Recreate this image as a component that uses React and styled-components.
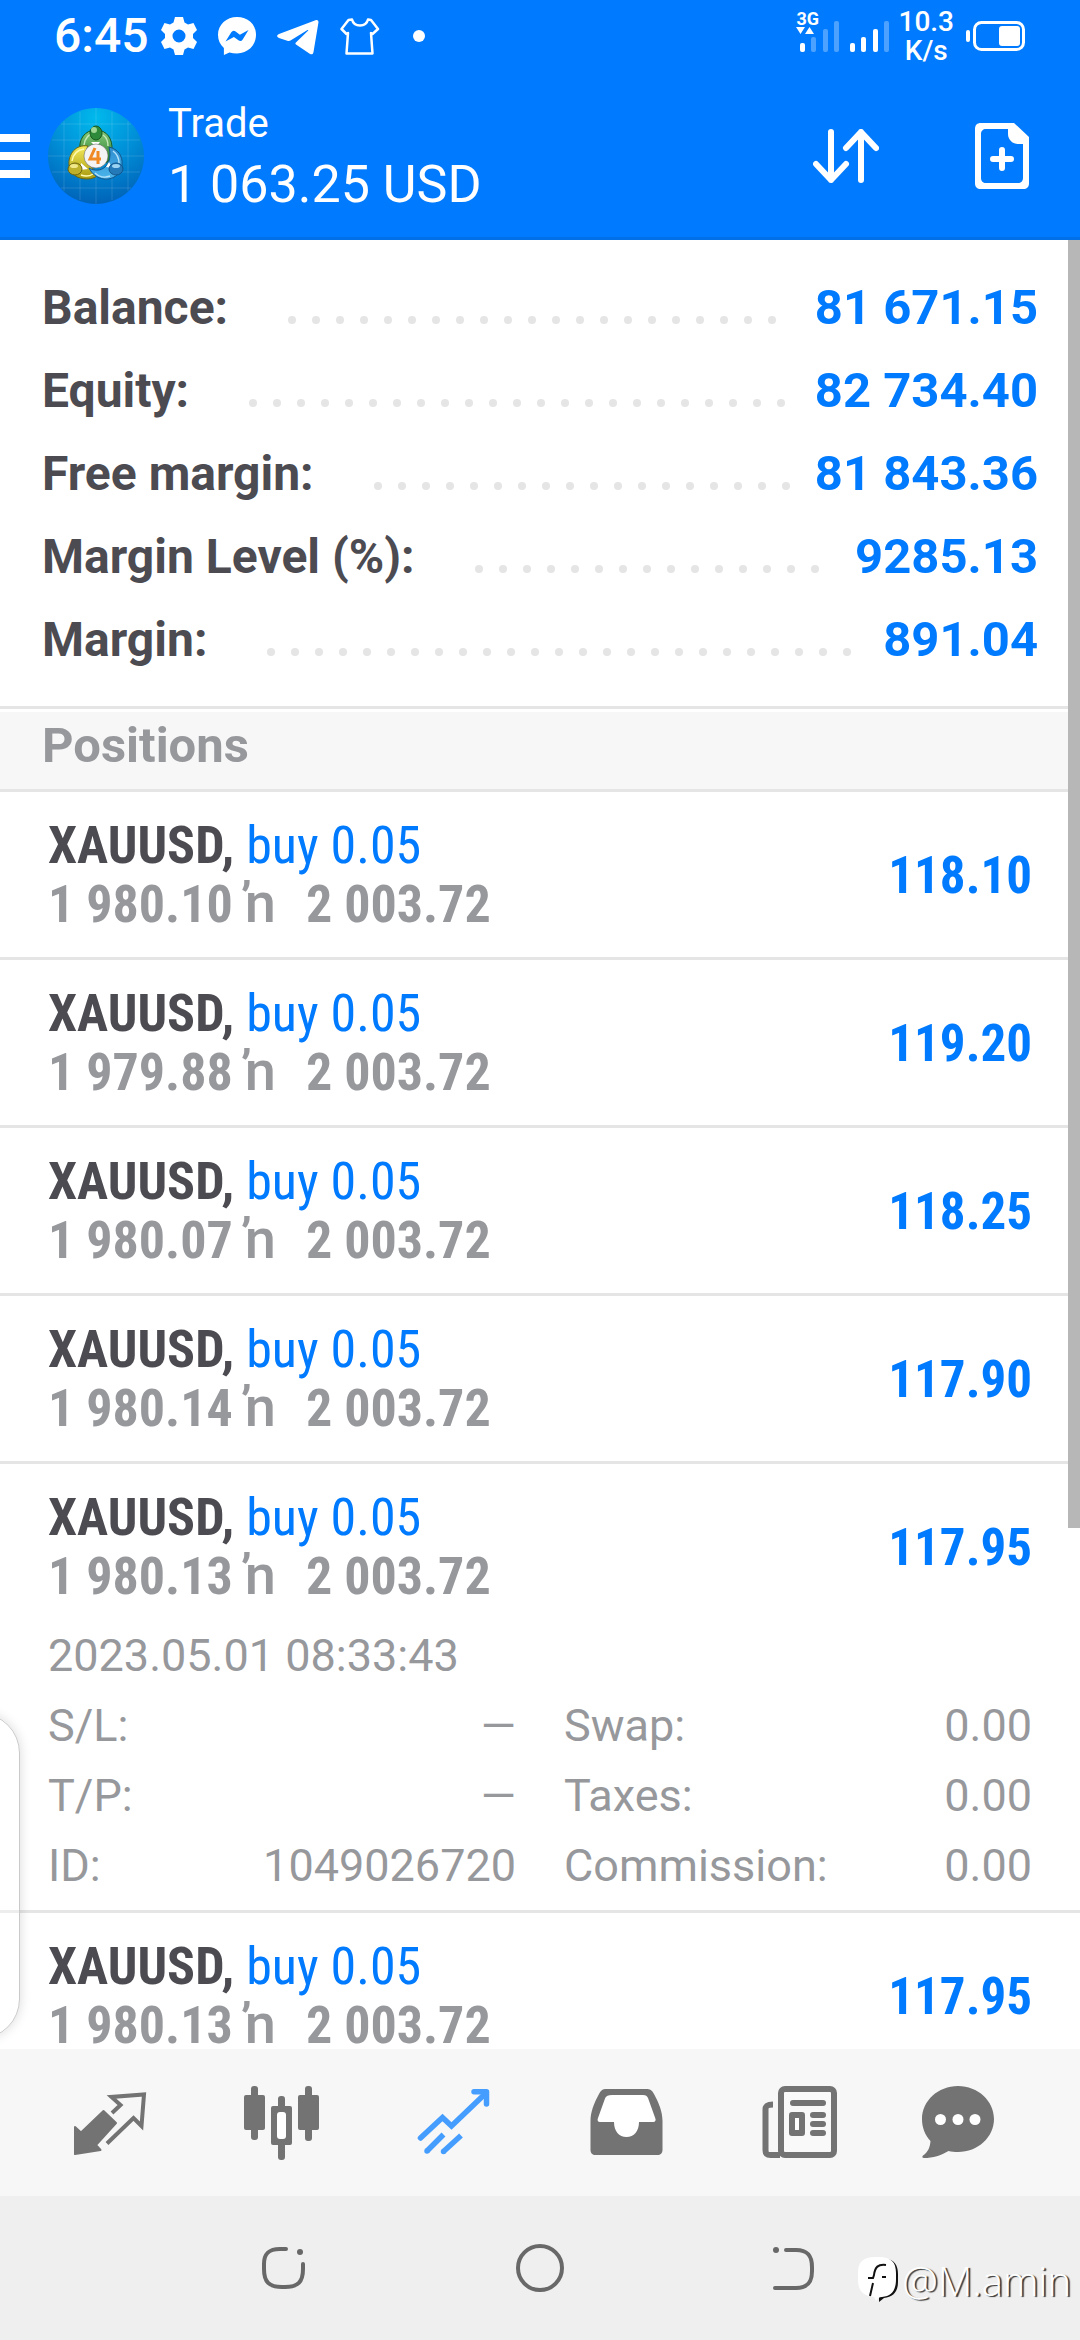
import styled, { createGlobalStyle } from 'styled-components'

const summary = [
    { label: 'Balance:', value: '81 671.15' },
    { label: 'Equity:', value: '82 734.40' },
    { label: 'Free margin:', value: '81 843.36' },
    { label: 'Margin Level (%):', value: '9285.13' },
    { label: 'Margin:', value: '891.04' },
]

const positions = [
    { open: '1 980.10', profit: '118.10' },
    { open: '1 979.88', profit: '119.20' },
    { open: '1 980.07', profit: '118.25' },
    { open: '1 980.14', profit: '117.90' },
    {
        open: '1 980.13',
        profit: '117.95',
        time: '2023.05.01 08:33:43',
        details: [
            ['S/L:', '—', 'Swap:', '0.00'],
            ['T/P:', '—', 'Taxes:', '0.00'],
            ['ID:', '1049026720', 'Commission:', '0.00'],
        ],
    },
    { open: '1 980.13', profit: '117.95' },
]

const dots = Array.from({ length: 40 })

const StatusIcons = () => (
    <>
        <svg width="36" height="38" viewBox="0 0 36 38" fill="#fff" aria-hidden="true">
            <path fillRule="evenodd" d="M14 0h8l1.500 5.500 3.500 2L32.500 6 36 13l-4 4v4l4 4-3.500 7-5.500-1.500-3.500 2L22 38h-8l-1.500-5.500-3.500-2L3.500 32 0 25l4-4v-4l-4-4 3.500-7L9 7.500l3.500-2zM18 12.500a6.500 6.500 0 1 0 0 13 6.500 6.500 0 0 0 0-13z" />
        </svg>
        <svg width="38" height="38" viewBox="0 0 38 38" aria-hidden="true">
            <path fill="#fff" d="M19 0C8.500 0 0 7.600 0 17.800c0 5.400 2.200 10 5.900 13.200V38l5.500-2.600c2.300.7 4.900 1 7.600 1 10.500 0 19-7.600 19-18.600S29.500 0 19 0z" />
            <path fill="#007aff" d="M7.500 24.500L13.300 15.300a3 3 0 0 1 4.300-.8l4.300 3.300 8.600-4.800-5.800 9.500a3 3 0 0 1-4.300.8l-4.500-3.400z" />
        </svg>
        <svg width="42" height="38" viewBox="0 0 42 38" fill="#fff" aria-hidden="true">
            <path d="M2 17L38.500 3.200c2-.7 3.300.4 2.900 2.600L36.500 35c-.4 2.400-1.800 3-3.800 1.700L19 27.600c-.8-.6-.8-1.300-.1-2L31 13.800c.6-.6-.1-1-.9-.5L13.500 23.600c-.8.5-1.600.6-2.500.3L2 21c-2.500-.9-2.500-3 0-4z" />
        </svg>
        <svg width="40" height="38" viewBox="0 0 40 38" fill="none" stroke="#fff" strokeWidth="2.500" strokeLinejoin="round" aria-hidden="true">
            <path d="M12 2.500c2 8 14 8 16 0l3 .5 7 9-5.500 5-1.500-1 1.500 20.500h-26L8 16l-1.500 1L1.500 12l7-9z" />
        </svg>
        <svg width="12" height="12" viewBox="0 0 12 12" fill="#fff" aria-hidden="true">
            <circle cx="6" cy="6" r="6" />
        </svg>
    </>
)

const Signal = ({ strength }) => (
    <svg width="40" height="32" viewBox="0 0 40 32" fill="#fff" aria-hidden="true">
        <rect x="0" y="23" width="5" height="9" rx="2" />
        <rect x="11" y="17" width="5" height="15" rx="2" opacity={strength > 1 ? 1 : 0.3} />
        <rect x="23" y="9" width="5" height="23" rx="2" opacity={strength > 2 ? 1 : 0.3} />
        <rect x="34" y="1" width="5" height="31" rx="2" opacity="0.3" />
    </svg>
)

const Battery = () => (
    <svg width="60" height="30" viewBox="0 0 60 30" aria-hidden="true">
        <rect x="0" y="9" width="4" height="12" rx="2" fill="#fff" />
        <rect x="8.500" y="1.500" width="49" height="27" rx="7" fill="none" stroke="#fff" strokeWidth="3" />
        <rect x="33" y="5" width="21" height="20" rx="3" fill="#fff" />
    </svg>
)

const Logo = () => (
    <svg width="96" height="96" viewBox="0 0 96 96" role="img" aria-label="MetaTrader 4">
        <defs>
            <radialGradient id="sky" cx="0.5" cy="0.1" r="0.9">
                <stop offset="0" stopColor="#00b9ec" />
                <stop offset="0.5" stopColor="#0090d8" />
                <stop offset="1" stopColor="#0063b8" />
            </radialGradient>
            <linearGradient id="green" x1="0" y1="0" x2="0" y2="1">
                <stop offset="0" stopColor="#8ccb7c" />
                <stop offset="1" stopColor="#1d7a2c" />
            </linearGradient>
            <linearGradient id="yellow" x1="0" y1="0" x2="0" y2="1">
                <stop offset="0" stopColor="#f4ea5a" />
                <stop offset="1" stopColor="#a79a10" />
            </linearGradient>
            <linearGradient id="blue" x1="0" y1="0" x2="0" y2="1">
                <stop offset="0" stopColor="#2f8ed0" />
                <stop offset="1" stopColor="#4bb4ea" />
            </linearGradient>
        </defs>
        <circle cx="48" cy="48" r="48" fill="url(#sky)" />
        <path stroke="#fff" strokeOpacity="0.13" d="M16 13v70M32 4v88M48 0v96M64 4v88M80 13v70M13 16h70M4 32h88M0 48h96M4 64h88M13 80h70" />
        <path fill="url(#green)" stroke="#17591f" d="M32 44c-2-13 5-22 16-22s17 9 16 21c0 6-3 10-6 12l-3-12c-3-6-11-6-14 0z" />
        <path fill="none" stroke="#c5e8b9" strokeWidth="1.500" d="M36 37c1-7 5-11 10-12M60 38c0-6-2-9-5-11" />
        <path fill="url(#yellow)" stroke="#6b6410" d="M40 38c-12-2-20 8-19 19 2 10 9 14 18 14 5 0 10-2 12-5l-9-8c-5-3-6-13-2-20z" />
        <path fill="none" stroke="#fffbb0" strokeWidth="1.500" d="M36 41c-7 1-11 6-12 12M33 67c5 2 9 1 12-1" />
        <path fill="url(#blue)" stroke="#12568c" d="M61 39c9 2 14 9 13 18-1 10-10 15-18 14-7-1-12-5-15-11 5 3 12 3 16-1 5-4 6-12 4-20z" />
        <path fill="none" stroke="#b5e2fa" strokeWidth="1.500" d="M65 43c4 3 6 7 6 12M47 65c4 4 10 5 15 3" />
        <path fill="#fff" d="M43 34h9l-4 5zM33 55l7 6-8 1zM58 59l3-5 3 6z" />
        <ellipse cx="48" cy="25" rx="6" ry="7" fill="#2d8a3a" stroke="#17591f" />
        <ellipse cx="46" cy="22" rx="3" ry="3" fill="#9fd694" />
        <ellipse cx="27" cy="61" rx="7" ry="6" fill="#bdb02a" stroke="#6b6410" />
        <ellipse cx="26" cy="58" rx="4" ry="2" fill="#f0e88a" />
        <ellipse cx="68" cy="61" rx="7" ry="6" fill="#2479b8" stroke="#12568c" />
        <ellipse cx="68" cy="58" rx="4" ry="2" fill="#9bd3f2" />
        <circle cx="48" cy="48" r="12" fill="#f4f4f4" stroke="#555" strokeWidth="0.500" />
        <path fill="none" stroke="#f08a24" strokeWidth="3" d="M47 40l-5 11h11M50 43v13" />
    </svg>
)

const ArrowsIcon = () => (
    <svg width="84" height="84" viewBox="0 0 84 84" aria-hidden="true">
        <path fill="currentColor" stroke="currentColor" strokeWidth="2" strokeLinejoin="round" d="M7 46l6 5.500L35.500 30 48 42 28 64l4.500 5L7 73z" />
        <path fill="none" stroke="currentColor" strokeWidth="4" d="M44 32l8.500-8L43.500 16l32.500-2.500L73.500 45l-8-8L39 62.500" />
    </svg>
)

const CandlesIcon = () => (
    <svg width="84" height="84" viewBox="0 0 84 84" fill="currentColor" aria-hidden="true">
        <rect x="11" y="5" width="7" height="54" rx="3" />
        <rect x="4" y="14" width="21" height="35" rx="2" />
        <rect x="38" y="15" width="7" height="64" rx="3" />
        <rect x="31" y="25" width="21" height="39" rx="2" />
        <rect x="37" y="31" width="9" height="27" rx="3" fill="#fff" />
        <rect x="65" y="5" width="7" height="55" rx="3" />
        <rect x="58" y="14" width="21" height="35" rx="2" />
    </svg>
)

const TrendIcon = () => (
    <svg width="84" height="84" viewBox="0 0 84 84" fill="none" stroke="currentColor" strokeWidth="5.500" aria-hidden="true">
        <path d="M8.500 57l22-20.500 9 8.500L74 12" strokeLinecap="round" />
        <path d="M62 10.700h12.500V23" strokeLinecap="round" strokeLinejoin="round" />
        <path d="M31.500 53.500L15 70M49 54.500L31.500 70.500" />
        <path d="M15 70v0M31.500 70.500v0" strokeLinecap="round" />
    </svg>
)

const InboxIcon = () => (
    <svg width="84" height="84" viewBox="0 0 84 84" aria-hidden="true">
        <path fill="currentColor" d="M22 8h40c4 0 6 1 8 5 5 9 8.500 18 8.500 27v29c0 3-2 5-5 5h-62c-3 0-5-2-5-5V40c0-9 3.500-18 8.500-27 2-4 4-5 7-5z" />
        <path fill="#fff" d="M28 14h31c3 0 4 1 5 3l7.200 20c1 2 .3 4-2 4H55c0 9-5 15-12.500 15S30 50 30 41H16c-2.300 0-3-2-2-4l7.200-20c1-2 3-3 6.800-3z" />
    </svg>
)

const NewsIcon = () => (
    <svg width="84" height="84" viewBox="-2 0 84 84" fill="currentColor" aria-hidden="true">
        <path fill="none" stroke="currentColor" strokeWidth="6" d="M15 23.500c-5 0-7.500 1-7.500 5V69c0 4 2 5 5 5H22" />
        <rect x="23" y="8" width="53" height="66" rx="4" fill="#f9f9f9" stroke="currentColor" strokeWidth="6" />
        <rect x="32" y="19" width="36" height="6" rx="3" />
        <rect x="34" y="34" width="10" height="18" fill="#fff" stroke="currentColor" strokeWidth="6" strokeLinejoin="round" />
        <rect x="52" y="31" width="16" height="6" rx="3" />
        <rect x="52" y="40" width="16" height="6" rx="3" />
        <rect x="52" y="49" width="16" height="6" rx="3" />
    </svg>
)

const ChatIcon = () => (
    <svg width="84" height="84" viewBox="12 0 84 84" overflow="visible" fill="currentColor" aria-hidden="true">
        <path d="M42 5c20 0 36 15 36 33S62 71 42 71c-3.500 0-6.500-.4-9.500-1C25 74.500 17 77 8 77c-2 0-2-1.500-1-2.500 5-3.500 7-8 7.500-14.500C9 54 6 46.500 6 38 6 20 22 5 42 5z" />
        <g fill="#fff">
            <circle cx="24.500" cy="38.500" r="5.500" />
            <circle cx="42" cy="38.500" r="5.500" />
            <circle cx="59" cy="38.500" r="5.500" />
        </g>
    </svg>
)

const tabs = [
    { name: 'Quotes', Icon: ArrowsIcon },
    { name: 'Charts', Icon: CandlesIcon },
    { name: 'Trade', Icon: TrendIcon, active: true },
    { name: 'History', Icon: InboxIcon },
    { name: 'News', Icon: NewsIcon },
    { name: 'Messages', Icon: ChatIcon },
]

const Position = ({ open, profit, time, details }) => (
    <Item>
        <ItemMain>
            <div>
                <Symbol>XAUUSD, <span>buy 0.05</span></Symbol>
                <Prices>{open} <span>ŉ</span>{'\u00a0 '}2 003.72</Prices>
            </div>
            <Profit>{profit}</Profit>
        </ItemMain>
        {details && (
            <Details>
                <Time>{time}</Time>
                <DetailTable>
                    <tbody>
                        {details.map(([left, leftValue, right, rightValue]) => (
                            <tr key={left}>
                                <th scope="row">{left}</th>
                                <td>{leftValue}</td>
                                <th scope="row">{right}</th>
                                <td>{rightValue}</td>
                            </tr>
                        ))}
                    </tbody>
                </DetailTable>
            </Details>
        )}
    </Item>
)

const App = () => {
    return (
        <Screen>
            <GlobalStyle />
            <StatusBar>
                <Notifications>
                    <Clock>6:45</Clock>
                    <StatusIcons />
                </Notifications>
                <System>
                    <Mobile>
                        <NetType>
                            3G
                            <svg width="18" height="7" viewBox="0 0 18 7" fill="#fff" aria-hidden="true">
                                <path d="M0 0h9L4.500 7zM9 7h9L13.500 0z" />
                            </svg>
                        </NetType>
                        <Signal strength={1} />
                    </Mobile>
                    <Signal strength={3} />
                    <Speed>10.3<br />K/s</Speed>
                    <Battery />
                </System>
            </StatusBar>

            <Header>
                <IconButton aria-label="Open menu">
                    <svg width="30" height="44" viewBox="0 0 30 44" fill="#fff" aria-hidden="true">
                        <path d="M0 0h30v8H0zM0 18h30v8H0zM0 36h30v8H0z" />
                    </svg>
                </IconButton>
                <Logo />
                <Title>
                    <h1>Trade</h1>
                    <p>1 063.25 USD</p>
                </Title>
                <Actions>
                    <IconButton aria-label="Sort">
                        <svg width="66" height="54" viewBox="0 0 66 54" fill="none" stroke="#fff" strokeWidth="6" strokeLinecap="round" strokeLinejoin="round" aria-hidden="true">
                            <path d="M18 3v48M3 35l15 16 15-16M48 51V3M33 19L48 3l15 16" />
                        </svg>
                    </IconButton>
                    <IconButton aria-label="New order">
                        <svg width="54" height="66" viewBox="0 0 54 66" aria-hidden="true">
                            <path fill="#fff" fillRule="evenodd" d="M6 0h33l15 14v46c0 4-2 6-6 6H6c-4 0-6-2-6-6V6c0-4 2-6 6-6zm5 6c-3 0-5 2-5 5v44c0 3 2 5 5 5h32c3 0 5-2 5-5V21h-5c-5 0-10-4-10-10V6z" />
                            <path stroke="#fff" strokeWidth="6" strokeLinecap="round" d="M18 36h18M27 27v18" />
                        </svg>
                    </IconButton>
                </Actions>
            </Header>

            <Content>
                <Summary>
                    {summary.map(({ label, value }) => (
                        <SummaryRow key={label}>
                            <dt>{label}</dt>
                            <Leader aria-hidden="true">
                                {dots.map((_, i) => <Dot key={i} />)}
                            </Leader>
                            <dd>{value}</dd>
                        </SummaryRow>
                    ))}
                </Summary>
                <SectionTitle>Positions</SectionTitle>
                <List>
                    {positions.map((position, i) => <Position key={i} {...position} />)}
                </List>
                <Scrollbar />
                <EdgePanel />
            </Content>

            <TabBar>
                {tabs.map(({ name, Icon, active }) => (
                    <Tab key={name} aria-label={name} $active={active}>
                        <Icon />
                    </Tab>
                ))}
            </TabBar>

            <SystemNav>
                <SystemButton aria-label="Recents">
                    <svg width="48" height="48" viewBox="0 0 48 48" aria-hidden="true">
                        <path d="M26 5h-6C8 5 4 10 4 20v5c0 13 5 18 18 18h3c13 0 18-5 18-18v-5" />
                        <circle cx="40" cy="8" r="3" />
                    </svg>
                </SystemButton>
                <SystemButton aria-label="Home">
                    <svg width="50" height="50" viewBox="0 0 50 50" aria-hidden="true">
                        <path d="M25 3a22 22 0 1 0 0 44 22 22 0 1 0 0-44z" />
                    </svg>
                </SystemButton>
                <SystemButton aria-label="Back">
                    <svg width="48" height="48" viewBox="0 0 48 48" aria-hidden="true">
                        <path d="M14 6h10c12 0 16 6 16 17v4c0 11-4 17-16 17H3" />
                        <circle cx="4" cy="6" r="3" />
                    </svg>
                </SystemButton>
                <Watermark>
                    <svg width="44" height="48" viewBox="0 0 44 48" aria-hidden="true">
                        <path fill="#111" d="M21 2h8c7 1 11 6 11 15v8c0 10-5 15-14 16l-5 4z" />
                        <path fill="#fff" d="M17 0h4c12 0 17 5 17 16v6c0 11-4 17-14 18-3 0-5 2-6 4l-2-4C5 39 0 34 0 22v-6C0 5 5 0 17 0z" />
                        <path fill="none" stroke="#111" strokeWidth="2" d="M28 8c-8-1-11 2-12 10l-1 3h-5M15 26l-3 13M24 20h4" />
                    </svg>
                    @M.amin
                </Watermark>
            </SystemNav>
        </Screen>
    )
}

const GlobalStyle = createGlobalStyle`
    * {
        box-sizing: border-box;
    }

    body {
        margin: 0;
        font-family: Roboto, "Noto Sans", sans-serif;
    }

    h1, h2, p, dl, dd, ul {
        margin: 0;
        padding: 0;
    }

    svg {
        display: block;
        flex-shrink: 0;
    }
`

const Screen = styled.div`
    display: flex;
    flex-direction: column;
    height: 100vh;
    background: #fff;
    overflow: hidden;
`

const StatusBar = styled.div`
    display: flex;
    justify-content: space-between;
    align-items: center;
    height: 72px;
    padding: 0 54px;
    background: #007aff;
    color: #fff;
`

const Notifications = styled.div`
    display: flex;
    align-items: center;
    gap: 21px;

    svg:last-child {
        margin-left: 12px;
    }
`

const Clock = styled.span`
    margin-right: -9px;
    font-size: 48px;
    font-weight: 500;
    line-height: 72px;
`

const System = styled.div`
    display: flex;
    align-items: center;
    gap: 8px;
`

const Mobile = styled.div`
    position: relative;
    margin-right: 2px;
`

const NetType = styled.span`
    position: absolute;
    left: -4px;
    top: -9px;
    font-size: 18px;
    font-weight: 700;
    line-height: 16px;
`

const Speed = styled.span`
    margin-right: 4px;
    font-size: 28px;
    font-weight: 500;
    line-height: 29px;
    text-align: center;
`

const Header = styled.header`
    display: flex;
    align-items: center;
    gap: 18px;
    height: 168px;
    padding: 3px 51px 0 0;
    background: #007aff;
    border-bottom: 3px solid #006fe8;
    color: #fff;
`

const IconButton = styled.button`
    padding: 0;
    border: 0;
    background: none;
    cursor: pointer;
`

const Title = styled.div`
    flex: 1;
    padding: 0 0 2px 6px;

    h1 {
        font-size: 40px;
        font-weight: 400;
        line-height: 60px;
    }

    p {
        font-size: 52px;
        line-height: 62px;
    }
`

const Actions = styled.div`
    display: flex;
    align-items: center;
    gap: 96px;
`

const Content = styled.main`
    position: relative;
    flex: 1;
    min-height: 0;
    overflow: hidden;
`

const Summary = styled.dl`
    padding: 26px 42px 25px;
    border-bottom: 3px solid #e5e5e5;
    font-size: 48px;
    font-weight: 700;
    line-height: 83px;
`

const SummaryRow = styled.div`
    display: flex;
    align-items: center;

    dt {
        color: #4c4b51;
    }

    dd {
        color: #007aff;
        font-size: 49px;
    }
`

const Leader = styled.span`
    display: flex;
    flex: 1;
    flex-wrap: wrap;
    gap: 16px;
    height: 8px;
    margin: 24px 24px 0 60px;
    overflow: hidden;
`

const Dot = styled.i`
    width: 8px;
    height: 8px;
    border-radius: 50%;
    background: #e5e5e5;
`

const SectionTitle = styled.h2`
    margin-top: 3px;
    padding: 0 42px 9px;
    background: #f7f7f7;
    border-bottom: 3px solid #e5e5e5;
    color: #97989c;
    font-size: 49px;
    font-weight: 700;
    line-height: 68px;
`

const List = styled.ul`
    list-style: none;
`

const Item = styled.li`
    padding: 0 48px;
    border-bottom: 3px solid #e5e5e5;
    color: #97989c;
`

const ItemMain = styled.div`
    display: flex;
    justify-content: space-between;
    align-items: center;
    padding: 24px 0 23px;
    font-family: "Roboto Condensed", Roboto, sans-serif;
    font-size: 52px;
    font-weight: 700;
    line-height: 59px;
`

const Symbol = styled.p`
    color: #4c4b51;

    span {
        color: #007aff;
        font-weight: 400;
    }
`

/* the glyph between the two prices is wider than the condensed digits */
const Prices = styled.p`
    white-space: nowrap;

    span {
        padding-right: 6px;
        font-family: Roboto, sans-serif;
        font-size: 56px;
        font-weight: 500;
        line-height: 1;
    }
`

const Profit = styled.span`
    color: #007aff;
    font-size: 51px;
`

const Details = styled.div`
    padding-bottom: 9px;
    font-size: 45px;
    line-height: 70px;
`

const Time = styled.p`
    margin-top: -8px;
`

const DetailTable = styled.table`
    width: 100%;
    border-collapse: collapse;
    table-layout: fixed;

    th, td {
        padding: 0;
    }

    th {
        font-weight: 400;
        text-align: left;
    }

    td {
        text-align: right;
    }

    th:first-child, td:last-child {
        width: 20%;
    }

    td:nth-child(2) {
        padding-right: 24px;
    }

    th:nth-child(3) {
        padding-left: 24px;
    }
`

const Scrollbar = styled.div`
    position: absolute;
    top: 0;
    right: 0;
    width: 12px;
    height: 1288px;
    background: #b7b7b7;
`

const EdgePanel = styled.div`
    position: absolute;
    left: -60px;
    bottom: 10px;
    width: 80px;
    height: 326px;
    border: 1px solid #c9c9c9;
    border-radius: 40px;
    background: rgba(255, 255, 255, 0.3);
    box-shadow: 0 0 12px rgba(0, 0, 0, 0.15);
`

const TabBar = styled.nav`
    display: flex;
    height: 147px;
    padding: 0 24px;
    background: #f7f7f7;
`

const Tab = styled.button`
    display: flex;
    flex: 1;
    align-items: center;
    justify-content: center;
    padding: 0;
    border: 0;
    background: none;
    color: ${({ $active }) => ($active ? '#459dff' : '#737373')};
    cursor: pointer;
`

const SystemNav = styled.div`
    position: relative;
    display: flex;
    height: 144px;
    padding: 0 156px;
    background: #efefef;
`

const SystemButton = styled.button`
    display: flex;
    flex: 1;
    align-items: center;
    justify-content: center;
    padding: 0;
    border: 0;
    background: none;
    cursor: pointer;

    path {
        fill: none;
        stroke: #686868;
        stroke-width: 4;
        stroke-linecap: round;
    }

    circle {
        fill: #686868;
    }
`

const Watermark = styled.div`
    position: absolute;
    right: 9px;
    bottom: 32px;
    display: flex;
    align-items: center;
    color: #fff;
    font-family: "Open Sans", sans-serif;
    font-size: 40px;
    font-weight: 300;
    line-height: 54px;
    text-shadow: 2px 1px 1px #333;
`

export default App
